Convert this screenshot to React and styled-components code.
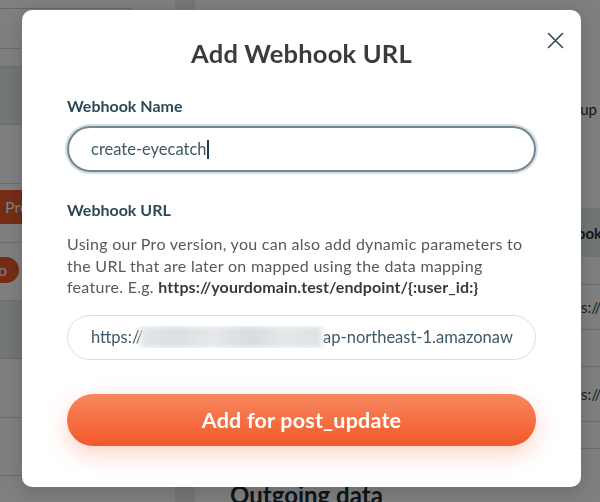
import React from "react";
import styled, { createGlobalStyle } from "styled-components";

const Global = createGlobalStyle`
  html, body { margin: 0; padding: 0; }
  body {
    font-family: "Lato", "Open Sans", "Liberation Sans", sans-serif;
    background: #ffffff;
    width: 600px;
    height: 502px;
    overflow: hidden;
  }
  * { box-sizing: border-box; }
`;

/* ---------- background page (dimmed) ---------- */
const Page = styled.div`
  display: grid;
  grid-template-columns: 175px 20px 1fr;
  height: 502px;
  overflow: hidden;
  color: #1f2f3a;
`;

const Sidebar = styled.div`
  display: flex;
  flex-direction: column;
  overflow: hidden;
`;

const SideTop = styled.div`
  height: 53px;
  padding: 8px 35px 0 0;
  border-bottom: 1px solid #d6dbde;
`;

const SearchBox = styled.div`
  height: 40px;
  border: 1px solid #c9cfd3;
  border-top-right-radius: 12px;
  border-left: none;
  border-bottom: none;
`;

const SideRow = styled.div`
  flex: none;
  height: ${(p) => p.$h}px;
  border-bottom: 1px solid #d6dbde;
  background: ${(p) => (p.$shade ? "#e6ecef" : "#ffffff")};
  display: flex;
  align-items: ${(p) => p.$align || "center"};
  padding-top: ${(p) => p.$pt || 0}px;
`;

const Badge = styled.span`
  display: inline-block;
  flex: none;
  background: #ea5a2c;
  color: #fff;
  font-size: 16px;
  padding: 0 12px 0 5px;
  height: ${(p) => p.$h}px;
  line-height: ${(p) => p.$h}px;
  border-radius: 0 14px 14px 0;
  margin-left: ${(p) => p.$ml || 0}px;
`;

const Gutter = styled.div`
  background: #e9edf0;
`;

const Main = styled.div`
  display: grid;
  grid-template-columns: 342px 1fr;
  grid-template-rows: 208px 1fr;
`;

const MainLeft = styled.div`
  grid-row: 1 / span 2;
  display: flex;
  flex-direction: column;
  justify-content: flex-end;
  padding-left: 35px;
`;

const OutgoingTitle = styled.h2`
  margin: 0 0 -8px;
  font-size: 24px;
  font-weight: 700;
  line-height: 30px;
  color: #1c2a33;
  white-space: nowrap;
`;

const MainRightTop = styled.div`
  padding: 100px 0 0 18px;
  font-size: 15px;
  white-space: nowrap;
`;

const Table = styled.div`
  display: flex;
  flex-direction: column;
`;

const HeadRow = styled.div`
  height: 49px;
  background: #e6ecef;
  display: flex;
  align-items: center;
  font-weight: 700;
  font-size: 15px;
  white-space: nowrap;
`;

const BodyRow = styled.div`
  height: ${(p) => p.$h}px;
  border-bottom: 1px solid #d6dbde;
  display: flex;
  align-items: center;
  padding-left: 17px;
  font-size: 15px;
  white-space: nowrap;
  color: #33454f;
`;

/* ---------- overlay + modal ---------- */
const Overlay = styled.div`
  position: fixed;
  inset: 0;
  background: rgba(0, 0, 0, 0.5);
  display: flex;
  justify-content: center;
  align-items: flex-start;
  padding: 10px 0 0 3px;
`;

const Modal = styled.div`
  position: relative;
  width: 559px;
  height: 477px;
  background: #ffffff;
  border-radius: 10px;
  box-shadow: 0 4px 20px rgba(0, 0, 0, 0.18);
  padding: 28px 45px 40px 45px;
  display: flex;
  flex-direction: column;
`;

const CloseButton = styled.button`
  position: absolute;
  top: 22px;
  right: 17px;
  width: 17px;
  height: 17px;
  padding: 0;
  border: none;
  background: none;
  color: #2f4a58;
  display: flex;
  align-items: center;
  justify-content: center;
`;

const Title = styled.h1`
  margin: 0;
  text-align: center;
  font-size: 25.5px;
  line-height: 30px;
  letter-spacing: 0.2px;
  font-weight: 700;
  color: #3b3b3b;
`;

const Label = styled.div`
  margin-top: ${(p) => p.$mt}px;
  font-size: 16px;
  line-height: 20px;
  font-weight: 700;
  color: #2c4958;
`;

const Field = styled.div`
  margin-top: ${(p) => p.$mt}px;
  height: ${(p) => (p.$focused ? 46 : 45)}px;
  border-radius: 24px;
  border: ${(p) => (p.$focused ? "2px solid #71868f" : "1px solid #d8dfe2")};
  box-shadow: ${(p) => (p.$focused ? "0 0 0 2px #d5dde1" : "none")};
  display: flex;
  align-items: center;
  padding: 0 22px 0 ${(p) => (p.$focused ? 22 : 23)}px;
  font-size: 16.5px;
  color: #3e5a68;
`;

const FieldText = styled.span`
  flex: 1;
  min-width: 0;
  display: flex;
  align-items: center;
  white-space: nowrap;
  overflow: hidden;
`;

const Caret = styled.span`
  display: inline-block;
  flex: none;
  width: 1.5px;
  height: 19px;
  background: #233b48;
  margin-left: 1px;
`;

const Blurred = styled.span`
  display: inline-block;
  flex: none;
  width: 182px;
  height: 22px;
  margin: 0 1px 0 -3px;
  background: linear-gradient(
    90deg,
    #e3e7ea 0%,
    #d9dee1 20%,
    #e6e9ec 40%,
    #d6dbdf 60%,
    #e4e8ea 80%,
    #dde1e4 100%
  );
  filter: blur(3px);
`;

const Help = styled.p`
  margin: 13px 0 0;
  font-size: 16px;
  line-height: 21.5px;
  letter-spacing: 0.28px;
  color: #555a5e;
  strong {
    color: #363a3d;
    font-weight: 700;
    letter-spacing: 0.1px;
  }
`;

const SubmitButton = styled.button`
  margin-top: 34px;
  height: 52px;
  width: 100%;
  border: none;
  border-radius: 26px;
  background: linear-gradient(180deg, #f8875f 0%, #f2592a 100%);
  box-shadow: 0 8px 22px rgba(242, 95, 50, 0.28);
  color: #ffffff;
  font-family: inherit;
  font-size: 21.5px;
  letter-spacing: 0.2px;
  font-weight: 700;
  cursor: pointer;
`;

function XIcon() {
  return (
    <svg width="17" height="17" viewBox="0 0 17 17" fill="none">
      <path
        d="M1.5 1.5 L15.5 15.5 M15.5 1.5 L1.5 15.5"
        stroke="currentColor"
        strokeWidth="1.6"
        strokeLinecap="round"
      />
    </svg>
  );
}

export default function App() {
  return (
    <>
      <Global />
      <Page>
        <Sidebar>
          <SideTop>
            <SearchBox />
          </SideTop>
          <SideRow $h={18} />
          <SideRow $h={58} $shade />
          <SideRow $h={59} />
          <SideRow $h={59} $align="flex-start" $pt={6}>
            <Badge $h={34}>Pro</Badge>
          </SideRow>
          <SideRow $h={58} $align="flex-start" $pt={14}>
            <Badge $h={26} $ml={-22}>Pro</Badge>
          </SideRow>
          <SideRow $h={58} $shade />
          <SideRow $h={59} />
          <SideRow $h={58} />
          <SideRow $h={30} />
        </Sidebar>
        <Gutter />
        <Main>
          <MainLeft>
            <OutgoingTitle>Outgoing data</OutgoingTitle>
          </MainLeft>
          <MainRightTop>Set up webhooks</MainRightTop>
          <Table>
            <HeadRow>Webhook URL</HeadRow>
            <BodyRow $h={28} />
            <BodyRow $h={45}>https://example.com/hook</BodyRow>
            <BodyRow $h={37} />
            <BodyRow $h={55}>https://example.com/hook</BodyRow>
            <BodyRow $h={27} />
          </Table>
        </Main>
      </Page>
      <Overlay>
        <Modal>
          <CloseButton aria-label="Close">
            <XIcon />
          </CloseButton>
          <Title>Add Webhook URL</Title>
          <Label $mt={28}>Webhook Name</Label>
          <Field $mt={10} $focused>
            <FieldText>
              create-eyecatch
              <Caret />
            </FieldText>
          </Field>
          <Label $mt={28}>Webhook URL</Label>
          <Help>
            Using our Pro version, you can also add dynamic parameters to the
            URL that are later on mapped using the data mapping feature. E.g.{" "}
            <strong>https://yourdomain.test/endpoint/{"{:user_id:}"}</strong>
          </Help>
          <Field $mt={17}>
            <FieldText>
              https://
              <Blurred />
              ap-northeast-1.amazonaws.com/default/create-eyecatch
            </FieldText>
          </Field>
          <SubmitButton>Add for post_update</SubmitButton>
        </Modal>
      </Overlay>
    </>
  );
}
